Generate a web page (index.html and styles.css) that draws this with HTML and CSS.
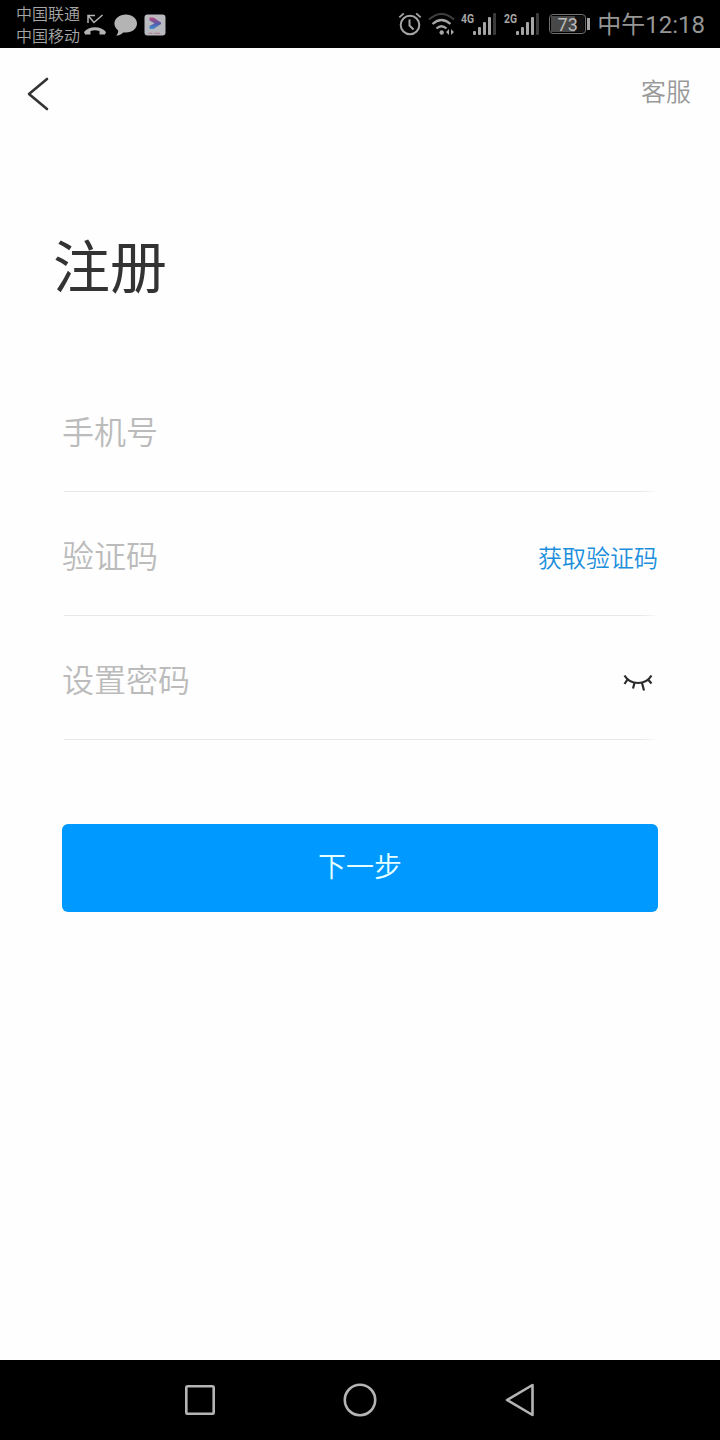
FILE: index.html
```
<!DOCTYPE html>
<html lang="zh-CN">
<head>
  <meta charset="UTF-8" />
  <meta name="viewport" content="width=device-width, initial-scale=1.0"/>
  <title>注册</title>
  <link rel="stylesheet" href="styles.css">
</head>
<body>
  <div class="status-bar">
    <div class="operadoras">
      <span>中国联通</span>
      <span>中国移动</span>
    </div>
    <svg class="icone-chamada" width="22" height="22" viewBox="0 0 22 22">
      <path d="M4 9V1.500h7M4.500 2l5.500 6.500L18.500 1" fill="none" stroke="#b4b4b4" stroke-width="1.500"/>
      <path d="M0 18C4.500 11.500 17.500 11.500 22 18L21 20.500H15.500V17Q11 15.600 6.500 17V20.500H1z" fill="#b4b4b4"/>
    </svg>
    <svg class="icone-balao" width="24" height="22" viewBox="0 0 24 22">
      <path d="M11.800 0.500C18.200 0.500 23 4.500 23 9.600S18.200 18.600 12 18.600c-1 0-1.900 0-2.800-.2C7.500 20.300 5 21.600 2.200 21.600 3.600 20 4.200 18.300 4.200 16.400 1.800 14.800 0.400 12.400 0.400 9.600 0.400 4.500 5.500 0.500 11.800 0.500z" fill="#b4b4b4"/>
    </svg>
    <svg class="icone-app" width="22" height="22" viewBox="0 0 22 22">
      <defs>
        <linearGradient id="seta" x1="0" y1="0" x2="0" y2="1">
          <stop offset="0" stop-color="#b8487c"/>
          <stop offset="0.500" stop-color="#5a58a6"/>
          <stop offset="1" stop-color="#3f8fd0"/>
        </linearGradient>
      </defs>
      <rect x="0.500" y="0.500" width="21" height="21" rx="3" fill="#b9bac0"/>
      <path d="M5.500 3.500H9.500L17 8.500V10L9.500 15H5.500V12L10.500 9.300 5.500 6.500z" fill="url(#seta)"/>
      <path d="M4.500 19.300h4M10 19.300h6" stroke="#b07a90" stroke-width="1"/>
    </svg>

    <div class="status-direita">
      <svg width="24" height="24" viewBox="0 0 24 24" fill="none" stroke="#a6a6a6">
        <circle cx="12" cy="13" r="9.300" stroke-width="2"/>
        <path d="M11.500 7.500v6l4 4" stroke-width="2"/>
        <path d="M1.300 5.300L5.800 1.300M22.700 5.300L18.200 1.300" stroke-width="1.800"/>
      </svg>
      <svg class="icone-wifi" width="28" height="24" viewBox="0 0 28 24" fill="none" stroke="#a6a6a6">
        <path d="M1 7.500Q13.500-3.500 26 7.500" stroke="#3f3f3f" stroke-width="2"/>
        <path d="M4.500 12Q13.500 4 22.500 12M8.500 16.500Q13.500 12 18.500 16.500" stroke-width="2.200"/>
        <circle cx="13.700" cy="20.500" r="2.200" fill="#a6a6a6" stroke="none"/>
        <path d="M21 17v6l-3-3zM23 17v6l3-3z" fill="#a6a6a6" stroke="none"/>
      </svg>
      <svg class="icone-sinal" width="36" height="24" viewBox="0 0 36 24" fill="#a6a6a6">
        <text class="rede" x="0" y="10.500" textLength="13" lengthAdjust="spacingAndGlyphs">4G</text>
        <rect x="12" y="19" width="3" height="4" rx="1"/>
        <rect x="17" y="15" width="3" height="8" rx="1"/>
        <rect x="22" y="10" width="3" height="13" rx="1"/>
        <rect x="27" y="5" width="3" height="18" rx="1"/>
        <rect x="32" y="1" width="3" height="22" rx="1" fill="#3a3a3a"/>
      </svg>
      <svg class="icone-sinal" width="36" height="24" viewBox="0 0 36 24" fill="#a6a6a6">
        <text class="rede" x="0" y="10.500" textLength="13" lengthAdjust="spacingAndGlyphs">2G</text>
        <rect x="12" y="19" width="3" height="4" rx="1"/>
        <rect x="17" y="15" width="3" height="8" rx="1"/>
        <rect x="22" y="10" width="3" height="13" rx="1"/>
        <rect x="27" y="5" width="3" height="18" rx="1"/>
        <rect x="32" y="1" width="3" height="22" rx="1" fill="#3a3a3a"/>
      </svg>
      <div class="bateria"><span>73</span></div>
      <div class="bateria-ponta"></div>
      <span class="hora">中午12:18</span>
    </div>
  </div>

  <div class="tela">
    <div class="topo">
      <button class="voltar" aria-label="返回">
        <svg width="24" height="36" viewBox="0 0 24 36" fill="none" stroke="#333" stroke-width="2.600" stroke-linecap="round" stroke-linejoin="round">
          <path d="M21 3L3 18L21 33"/>
        </svg>
      </button>
      <a class="ajuda">客服</a>
    </div>

    <h1>注册</h1>

    <form class="formulario">
      <div class="campo">
        <input type="text" placeholder="手机号" />
      </div>
      <div class="campo">
        <input type="text" placeholder="验证码" />
        <a class="codigo">获取验证码</a>
      </div>
      <div class="campo">
        <input type="password" placeholder="设置密码" />
        <svg class="olho" width="30" height="20" viewBox="0 0 30 20" fill="none" stroke="#2b2b2b" stroke-width="2.200">
          <path d="M1.500 3.500Q6 11 15 11T28.500 3.500M4.500 7.500L1.500 12M11.500 11L10 16.500M19 11L21 18.500M25 7.500L28.500 11.500"/>
        </svg>
      </div>
      <button type="button" class="proximo">下一步</button>
    </form>
  </div>

  <div class="nav-bar">
    <svg width="40" height="40" viewBox="0 0 40 40"><rect x="6.300" y="6.300" width="27.400" height="27.400" rx="1.500"/></svg>
    <svg width="40" height="40" viewBox="0 0 40 40"><circle cx="20" cy="20" r="15.200"/></svg>
    <svg width="40" height="40" viewBox="0 0 40 40"><path d="M32.500 5V35L7 20z"/></svg>
  </div>
</body>
</html>
```
FILE: styles.css
```
* {
  margin: 0; padding: 0; box-sizing: border-box;
  font-family: Roboto, "Noto Sans CJK SC", sans-serif;
}
body, html {
  height: 100%;
}
body {
  display: flex;
  flex-direction: column;
  background: #fefefe;
}
svg {
  display: block;
  flex: none;
}
.status-bar {
  display: flex;
  align-items: center;
  height: 48px;
  padding: 0 16px;
  background: #000;
  color: #a6a6a6;
}
.operadoras {
  display: flex;
  flex-direction: column;
  width: 64px;
  padding-top: 4px;
  font-size: 16px;
  line-height: 22px;
  font-weight: 350;
  white-space: nowrap;
}
.icone-chamada {
  margin-left: 4px;
}
.icone-balao {
  margin-left: 8px;
}
.icone-app {
  margin-left: 6px;
}
.icone-chamada, .icone-balao, .icone-app {
  margin-top: 2px;
}
.status-direita {
  display: flex;
  align-items: center;
  margin-left: auto;
}
.icone-wifi {
  margin-left: 6px;
}
.icone-sinal {
  margin-left: 5px;
}
.icone-sinal + .icone-sinal {
  margin-left: 7px;
}
.rede {
  font-size: 13px;
  font-weight: 700;
}
.bateria {
  width: 37px;
  height: 20px;
  margin-left: 9px;
  padding: 1px;
  border: 1.5px solid #707070;
  border-radius: 4px;
}
.bateria span {
  display: block;
  height: 100%;
  background: linear-gradient(to right, #484848 73%, #111 73%);
  color: #bbb;
  font-size: 18px;
  line-height: 17px;
  text-align: center;
}
.bateria-ponta {
  width: 3px;
  height: 12px;
  margin-left: 1px;
  background: #a6a6a6;
}
.hora {
  margin: 0 -1px 0 7px;
  padding-top: 3px;
  font-size: 24px;
  line-height: 45px;
  color: #969696;
  white-space: nowrap;
}
.tela {
  flex: 1;
}
.topo {
  display: flex;
  justify-content: space-between;
  align-items: center;
  height: 92px;
  padding: 0 29px 0 26px;
}
button {
  border: none;
  cursor: pointer;
}
.voltar {
  background: transparent;
}
.ajuda {
  padding-bottom: 8px;
  font-size: 25px;
  color: #999;
  font-weight: 350;
}
h1 {
  margin: 87px 0 0 53px;
  font-size: 57px;
  line-height: 84px;
  font-weight: 400;
  color: #333;
}
.formulario {
  padding: 57px 62px 0;
}
.campo {
  display: flex;
  align-items: center;
  height: 124px;
  padding-top: 7px;
  background: linear-gradient(to right, #e8e8e8 97%, #fefefe) 2px 100% / 596px 1px no-repeat;
}
.campo input {
  flex: 1;
  min-width: 0;
  height: 60px;
  padding-bottom: 1px;
  border: none;
  outline: none;
  background: transparent;
  font-size: 32px;
  font-weight: 350;
}
.campo input::placeholder {
  color: #bbb;
}
.codigo {
  padding-bottom: 3px;
  font-size: 24px;
  font-weight: 350;
  color: #1b8fdc;
}
.olho {
  margin-right: 5px;
}
.proximo {
  display: block;
  width: 100%;
  height: 88px;
  margin-top: 84px;
  padding-bottom: 6px;
  border-radius: 6px;
  background: #0099ff;
  color: #e8ffff;
  font-size: 28px;
  font-weight: 350;
}
.nav-bar {
  display: flex;
  justify-content: center;
  align-items: center;
  gap: 120px;
  height: 80px;
  background: #000;
  fill: none;
  stroke: #b4b4b4;
  stroke-width: 2.6;
  stroke-linejoin: round;
}
```
